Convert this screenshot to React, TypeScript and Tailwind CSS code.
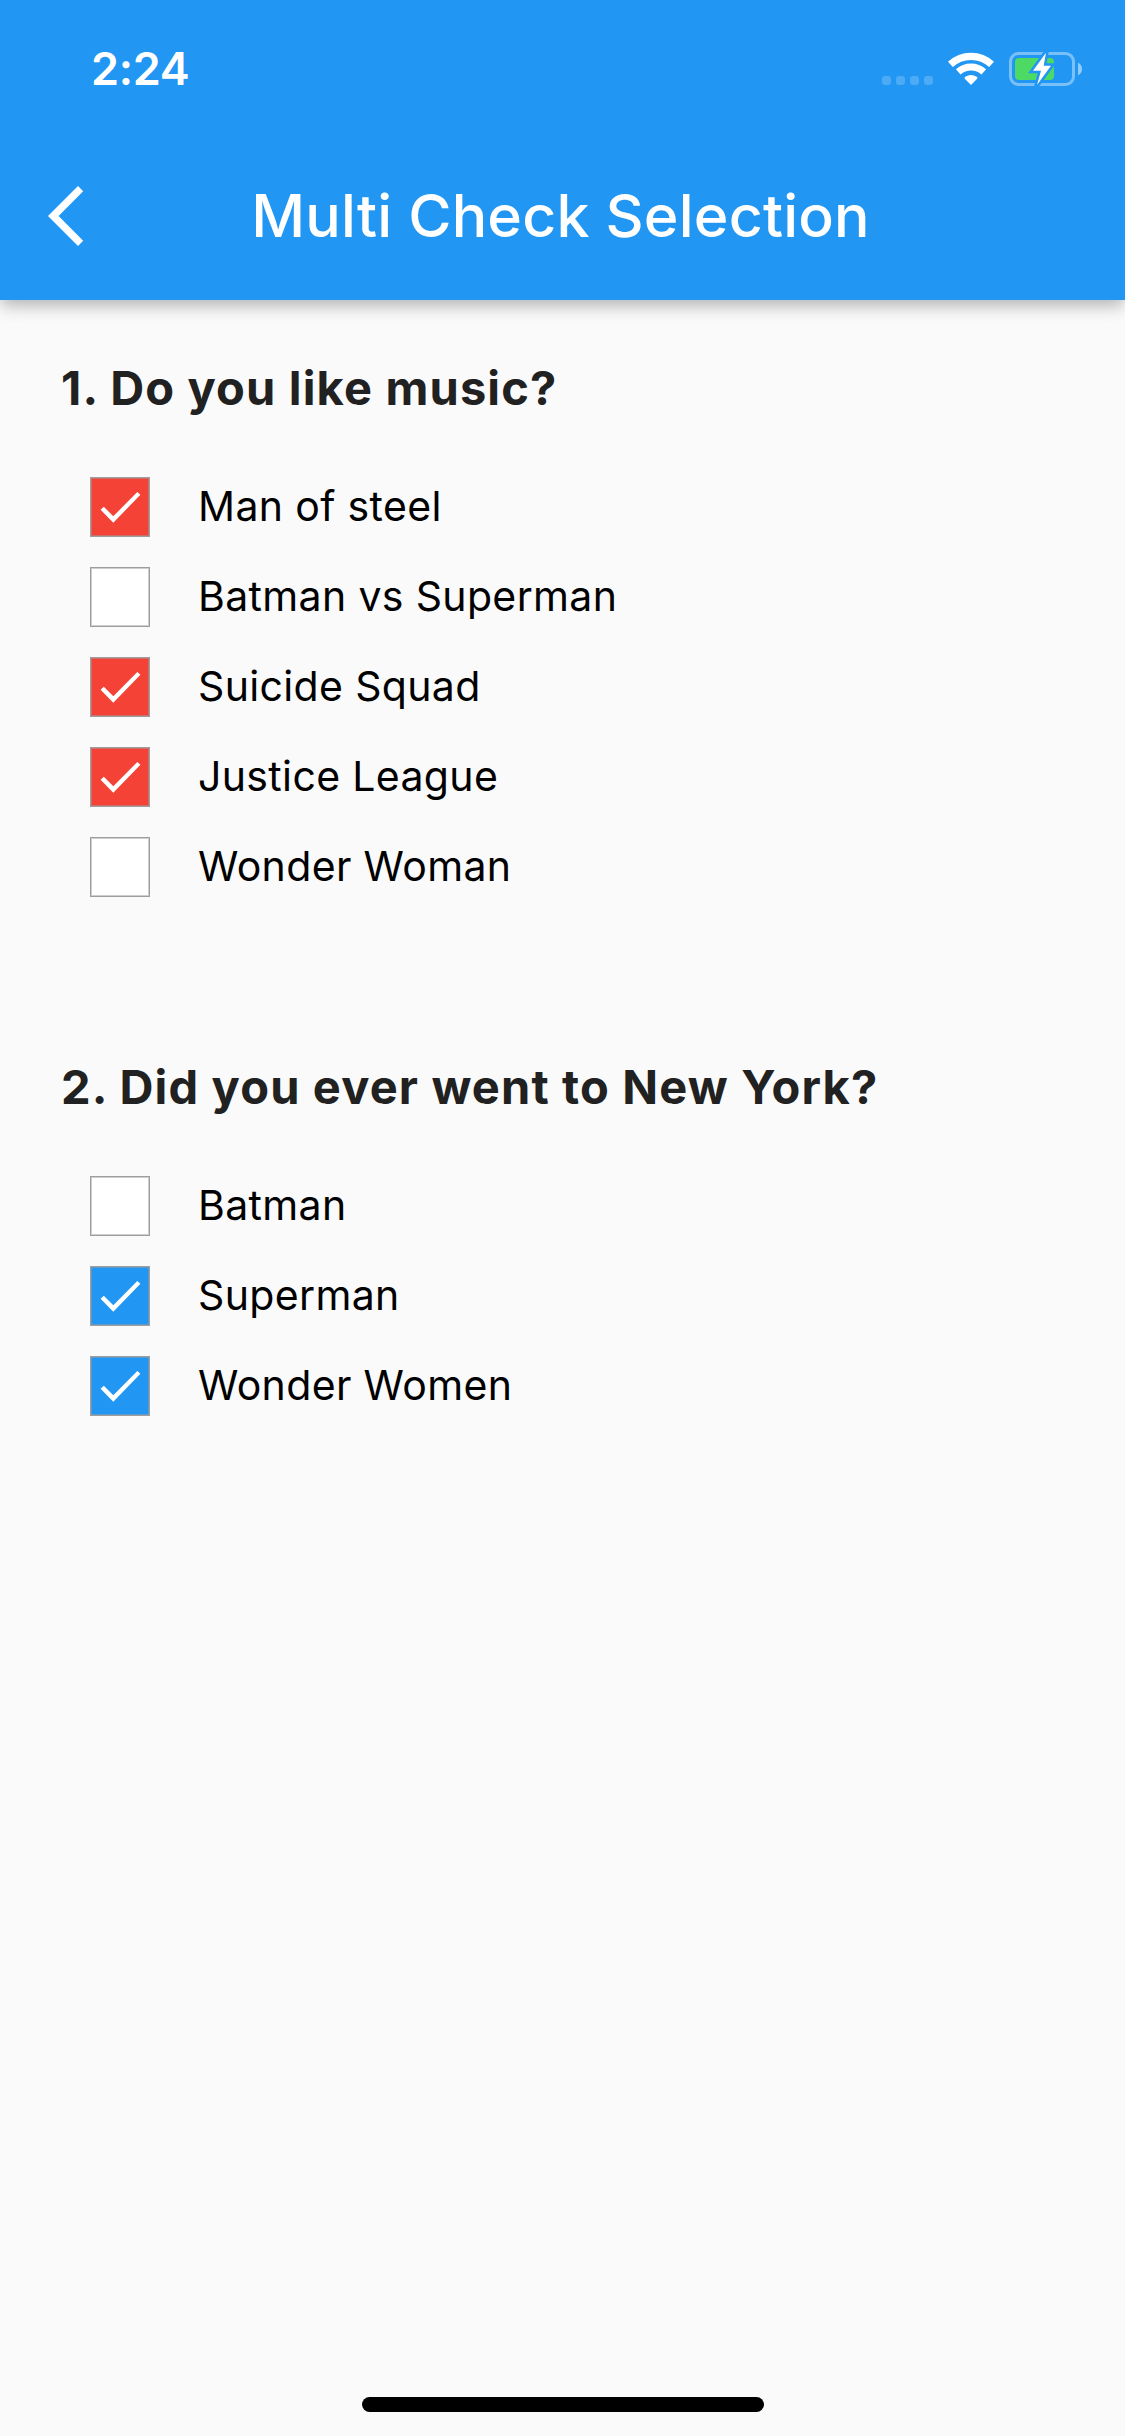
type Option = { label: string; checked: boolean };
type Question = { title: string; tone: "red" | "blue"; options: Option[] };

const questions: Question[] = [
  {
    title: "1. Do you like music?",
    tone: "red",
    options: [
      { label: "Man of steel", checked: true },
      { label: "Batman vs Superman", checked: false },
      { label: "Suicide Squad", checked: true },
      { label: "Justice League", checked: true },
      { label: "Wonder Woman", checked: false },
    ],
  },
  {
    title: "2. Did you ever went to New York?",
    tone: "blue",
    options: [
      { label: "Batman", checked: false },
      { label: "Superman", checked: true },
      { label: "Wonder Women", checked: true },
    ],
  },
];

function WifiIcon() {
  return (
    <svg width="46" height="34" viewBox="8 12 46 34" fill="none">
      <path d="M10.4 24.4A30.2 30.2 0 0 1 51.6 24.4" stroke="white" strokeWidth="7.2" />
      <path d="M18.2 31.8A19.6 19.6 0 0 1 43.8 31.8" stroke="white" strokeWidth="7" />
      <path d="M31 45L24.8 38.8Q24 37.6 25.3 36.8Q31 33 36.7 36.8Q38 37.6 37.2 38.8Z" fill="white" />
    </svg>
  );
}

function BatteryIcon() {
  return (
    <svg width="74" height="36" viewBox="9 11 74 36" fill="none">
      <rect x="10.5" y="13.5" width="63" height="31" rx="8" stroke="white" strokeOpacity="0.4" strokeWidth="3" />
      <path d="M78 22.8Q82 24.5 82 29Q82 33.5 78 35.2Z" fill="white" fillOpacity="0.5" />
      <rect x="15" y="18" width="39" height="22" rx="4" fill="#4cd964" />
      <path
        d="M46 12.7L33 30.7H41L37 45L51 25.7H43.7Z"
        fill="#2196f3"
        stroke="#2196f3"
        strokeWidth="5"
        strokeMiterlimit="10"
      />
      <path d="M46 12.7L33 30.7H41L37 45L51 25.7H43.7Z" fill="white" />
    </svg>
  );
}

function StatusBar() {
  return (
    <div className="flex h-[132px] items-start justify-between pl-[91px] pr-[42px]">
      <span className="mt-[39px] text-[45px] font-semibold leading-[60px] tracking-[-0.3px]">2:24</span>
      <div className="mt-[51px] flex h-9 items-start">
        <div className="mt-[25px] flex gap-[5px]">
          {[0, 1, 2, 3].map((i) => (
            <span key={i} className="size-[9px] rounded-[3px] bg-white/20" />
          ))}
        </div>
        <div className="ml-[15px] mt-px">
          <WifiIcon />
        </div>
        <div className="ml-[15px]">
          <BatteryIcon />
        </div>
      </div>
    </div>
  );
}

function Checkbox({ checked, tone }: { checked: boolean; tone: "red" | "blue" }) {
  const fill = !checked ? "bg-white" : tone === "red" ? "bg-[#f44336]" : "bg-[#2196f3]";
  return (
    <span
      role="checkbox"
      aria-checked={checked}
      className={`block size-[60px] border border-[#9e9e9e] shadow-[inset_0_0_0_1px_rgba(158,158,158,0.5)] ${fill}`}
    >
      {checked && (
        <svg width="58" height="58" viewBox="1 1 58 58">
          <path d="M10.6 32.8L13.8 29.8L23.3 39.2L47.3 15.1L50.4 17.7L23.3 45.8Z" fill="white" />
        </svg>
      )}
    </span>
  );
}

export default function App() {
  return (
    <div className="flex h-[2436px] w-[1125px] flex-col bg-[#fafafa] font-[Inter,sans-serif]">
      <header className="h-[300px] shrink-0 bg-[#2196f3] text-white shadow-[0_6px_12px_-3px_rgba(0,0,0,0.14),0_9px_15px_0_rgba(0,0,0,0.11),0_3px_24px_0_rgba(0,0,0,0.07)]">
        <StatusBar />
        <div className="grid h-[168px] grid-cols-[168px_1fr_168px] items-center">
          <button aria-label="Back" className="pl-12">
            <svg width="36" height="60" viewBox="0 0 36 60">
              <path d="M30 0L35.2 5.2L10.6 30L35.2 54.8L30 60L0 30Z" fill="white" />
            </svg>
          </button>
          <h1 className="-ml-1 -mt-px whitespace-nowrap text-center text-[59px] font-medium leading-[70px] tracking-[0.2px]">
            Multi Check Selection
          </h1>
        </div>
      </header>
      <main className="flex flex-1 flex-col gap-[145px] pt-[58px]">
        {questions.map((q) => (
          <section key={q.title}>
            <h2 className="pl-[61px] text-[47px] font-bold leading-[60px] tracking-[1.16px] text-[#212121]">
              {q.title}
            </h2>
            <ul className="mt-11 pl-[90px]">
              {q.options.map((o) => (
                <li key={o.label} className="flex h-[90px] items-center gap-12">
                  <Checkbox checked={o.checked} tone={q.tone} />
                  <span className="-mt-[3px] text-[41px] font-normal leading-[50px] tracking-[0.35px] text-black">
                    {o.label}
                  </span>
                </li>
              ))}
            </ul>
          </section>
        ))}
      </main>
      <div className="mb-6 h-[15px] w-[402px] self-center rounded-full bg-black" />
    </div>
  );
}
